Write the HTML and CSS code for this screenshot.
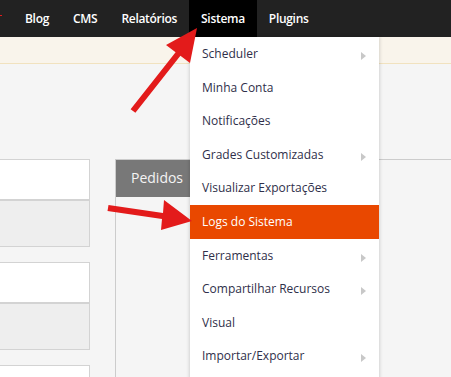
FILE: index.html
```html
<!DOCTYPE html>
<html lang="pt">
<head>
<meta charset="utf-8">
<link rel="stylesheet" href="styles.css">
</head>
<body>
<div class="page">
  <nav class="topnav">
    <a class="nav-item">Blog</a>
    <a class="nav-item">CMS</a>
    <a class="nav-item">Relatórios</a>
    <a class="nav-item active">Sistema</a>
    <a class="nav-item">Plugins</a>
  </nav>
  <div class="notice"></div>
  <main class="content">
    <div class="cards">
      <div class="card"><div class="card-top"></div><div class="card-bottom"></div></div>
      <div class="card"><div class="card-top"></div><div class="card-bottom"></div></div>
      <div class="card"><div class="card-top"></div><div class="card-bottom"></div></div>
    </div>
    <section class="panel">
      <div class="panel-head"><span class="panel-tab">Pedidos</span></div>
      <div class="panel-body"></div>
    </section>
  </main>

  <ul class="dropdown">
    <li class="dd-item has-sub">Scheduler</li>
    <li class="dd-item">Minha Conta</li>
    <li class="dd-item">Notificações</li>
    <li class="dd-item has-sub">Grades Customizadas</li>
    <li class="dd-item">Visualizar Exportações</li>
    <li class="dd-item selected">Logs do Sistema</li>
    <li class="dd-item has-sub">Ferramentas</li>
    <li class="dd-item has-sub">Compartilhar Recursos</li>
    <li class="dd-item">Visual</li>
    <li class="dd-item has-sub">Importar/Exportar</li>
  </ul>

  <svg class="annotations" width="451" height="377" viewBox="0 0 451 377">
    <rect x="0" y="15" width="2" height="1" fill="#e21b1b"/>
    <polygon points="130.6,109.2 175.6,52.2 166,45 197,28 190,63 180.4,55.8 135.4,112.8" fill="#e31b1b"/>
    <polygon points="108.5,205 163,213 164,200 192,221 161,230 162,219 107.5,211" fill="#e31b1b"/>
  </svg>
</div>
</body>
</html>
```

FILE: styles.css
```css
* { box-sizing: border-box; }
html, body { margin: 0; padding: 0; }
body {
  background: #f5f5f5;
  font-family: "Open Sans", "Liberation Sans", sans-serif;
  width: 451px;
  height: 377px;
  overflow: hidden;
}
.page {
  position: relative;
  width: 451px;
  height: 377px;
  overflow: hidden;
}
.topnav {
  display: flex;
  height: 37px;
  background: #222222;
  padding-left: 13px;
}
.nav-item {
  display: block;
  padding: 0 12px;
  line-height: 37px;
  font-size: 12px;
  font-weight: 600;
  letter-spacing: -0.3px;
  color: #ffffff;
}
.nav-item.active { background: #000000; }

.notice {
  height: 27px;
  background: #f9f4eb;
  border-bottom: 1px solid #f1e2bf;
}

.content {
  display: flex;
  align-items: flex-start;
  gap: 25px;
  padding-top: 95px;
}
.cards {
  width: 91px;
  margin-left: -1px;
  display: flex;
  flex-direction: column;
  gap: 15px;
}
.card { display: flex; flex-direction: column; }
.card-top {
  height: 42px;
  background: #ffffff;
  border: 1px solid #d3d3d3;
  border-bottom-width: 2px;
}
.card-bottom {
  height: 46px;
  background: #eeeeee;
  border: 1px solid #d3d3d3;
  border-top: none;
}
.panel {
  flex: 1;
  border-top: 1px solid #cccccc;
  border-left: 1px solid #cccccc;
  height: 260px;
}
.panel-head { height: 37px; }
.panel-tab {
  display: inline-block;
  height: 37px;
  line-height: 36px;
  padding: 0 20px 0 15px;
  width: 150px;
  background: #787878;
  color: #f4f4f4;
  font-size: 14px;
}

.dropdown {
  position: absolute;
  left: 190px;
  top: 37px;
  width: 189px;
  margin: 0;
  padding: 0;
  list-style: none;
  background: #ffffff;
  box-shadow: 0 0 4px rgba(0, 0, 0, 0.22);
  height: 360px;
}
.dd-item {
  position: relative;
  height: 33.6px;
  line-height: 33.6px;
  padding-left: 12px;
  font-size: 12px;
  color: #2f2f4a;
  white-space: nowrap;
}
.dd-item.has-sub::after {
  content: "";
  position: absolute;
  right: 13px;
  top: 15px;
  border-left: 5px solid #c8c8c8;
  border-top: 4.5px solid transparent;
  border-bottom: 4.5px solid transparent;
}
.dd-item.selected {
  background: #e94800;
  color: #ffffff;
}

.annotations {
  position: absolute;
  left: 0;
  top: 0;
  pointer-events: none;
}
```
